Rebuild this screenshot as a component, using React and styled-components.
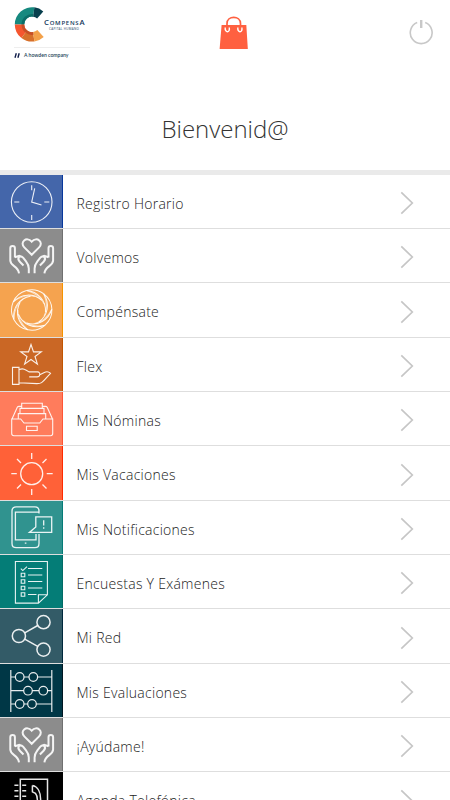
import styled, { createGlobalStyle } from "styled-components";

const GlobalStyle = createGlobalStyle`
  body {
    margin: 0;
    background: #fff;
    font-family: "Open Sans", "Noto Sans", sans-serif;
  }
`;

const Page = styled.div`
  width: 450px;
  height: 800px;
  overflow: hidden;
  background: #fff;
`;

const Header = styled.header`
  display: grid;
  grid-template-columns: 1fr 30px 1fr;
  align-items: start;
  height: 64px;
  padding: 0 16px 0 14px;
  box-sizing: border-box;
`;

const Brand = styled.div`
  width: 80px;
  padding-top: 6px;
`;

const BrandTop = styled.div`
  display: flex;
  align-items: flex-start;
  height: 42px;
  width: 76px;
  border-bottom: 1px solid #eee;
  box-sizing: border-box;
`;

const BrandName = styled.div`
  margin: 12px 0 0 -1px;
  color: #12395c;
  font-family: "Open Sans", sans-serif;
  font-size: 6px;
  font-weight: 600;
  line-height: 9px;
  letter-spacing: .75px;
  white-space: nowrap;

  b {
    font-size: 7.7px;
    font-weight: 600;
  }

  small {
    display: block;
    margin-left: 5px;
    font-size: 3px;
    font-weight: 400;
    line-height: 3px;
    letter-spacing: .3px;
  }
`;

const BrandOwner = styled.div`
  display: flex;
  align-items: center;
  gap: 4px;
  margin-top: 2px;
  color: #173e55;
  font-family: Lato, sans-serif;
  font-size: 5.1px;
  font-weight: 600;
  line-height: 10px;
  white-space: nowrap;
`;

const BagButton = styled.button`
  margin: 15px 0 0 0;
  padding: 0;
  border: none;
  background: none;
  line-height: 0;
`;

const ShopButton = styled(BagButton)`
  margin-left: 10px;
`;

const PowerButton = styled(BagButton)`
  margin-top: 19px;
  text-align: right;
`;

const Welcome = styled.h1`
  height: 105.6px;
  margin: 0;
  padding-top: 48px;
  box-sizing: border-box;
  color: #333;
  font-size: 24px;
  font-weight: 300;
  line-height: 34px;
  text-align: center;
`;

const Menu = styled.ul`
  margin: 0;
  padding: 0;
  list-style: none;
  border-top: 5px solid #eaeaea;
`;

const MenuItem = styled.li`
  display: flex;
  align-items: center;
  height: 54.33px;
  box-sizing: border-box;
  border-bottom: 1px solid #dedede;
`;

const IconBox = styled.div`
  width: 63px;
  height: 100%;
  box-sizing: border-box;
  background: ${(props) => props.$color};
  border-right: 1px solid ${(props) => props.$edge};

  svg {
    display: block;
    overflow: hidden;
  }
`;

const Label = styled.span`
  flex: 1;
  padding: 4.8px 0 0 13.5px;
  color: #222;
  font-size: 14px;
  font-weight: 300;
  line-height: 20px;
  letter-spacing: .27px;
  white-space: nowrap;
`;

const Chevron = styled.svg`
  flex: 0 0 auto;
  margin: 3.8px 36px 0 0;
`;

function Icon({ children, width = 1.1 }) {
  return (
    <svg width="62" height="53" viewBox="0 0 62 53" fill="none" stroke="#fff" strokeOpacity=".9" strokeWidth={width}>
      {children}
    </svg>
  );
}

const ClockIcon = () => (
  <Icon>
    <circle cx="31.7" cy="27" r="20.3" />
    <path d="M31.7 10.3v5M31.7 40v5M14.3 27h5M44.3 27h5M34.7 13.3L31.7 27l9.8 3" />
  </Icon>
);

const HandsIcon = () => (
  <Icon width={2}>
    <path d="M31.7 25.8l-7.4-7.4c-5-5 2.2-11.6 7.4-5.7 5.2-5.9 12.4.7 7.4 5.7z" />
    <path d="M19 44.3C18.3 37 10.3 37.2 10.3 31.5V19.2a2.3 2.3 0 0 1 4.6 0v9.3" />
    <path d="M23.5 36.5l-3.7-3.8c-3.5-3.7.5-7.2 3.5-3.8l2.7 3.5c2 2.5 2.8 4.2 2.8 7.2v4.7M14.9 28.3l4.3-1.5 3.2 1.2" />
    <path d="M44.4 44.3c.7-7.3 8.7-7.1 8.7-12.8V19.2a2.3 2.3 0 0 0-4.6 0v9.3" />
    <path d="M39.9 36.5l3.7-3.8c3.5-3.7-.5-7.2-3.5-3.8l-2.7 3.5c-2 2.5-2.8 4.2-2.8 7.2v4.7M48.5 28.3l-4.3-1.5-3.2 1.2" />
  </Icon>
);

const SwirlIcon = () => (
  <Icon width={1}>
    {[0, 1, 2, 3, 4, 5, 6].map((i) => (
      <g key={i} transform={`translate(31.7 27) rotate(${i * 51.43 + 10})`}>
        <path d="M-8.5 -18.3Q0 -22.4 9 -18.1" />
        <path d="M-8.5 -18.3C3 -19.3 12.5 -12 13.9 -.5" />
        <path d="M-8.5 -18.3C0 -17.5 7 -14.5 11.2 -8" strokeOpacity=".6" />
      </g>
    ))}
  </Icon>
);

const StarHandIcon = () => (
  <Icon>
    <path d="M31 6.5l2.5 7.4h7.8l-6.3 4.6 2.4 7.6-6.4-4.6-6.4 4.6 2.4-7.6-6.3-4.6h7.8z" />
    <path d="M12.5 29.4H19v17h-6.5zM19 31.7c4-1.8 6.5-.3 10 2.2h8.7c3 .3 2.7 4.8-.7 5h-7.8M39.8 36.8l4.5-2.4c2.7-1.2 5.6-.4 6.3 1-3.3 2.8-5.7 7-9 9.2-1.2.8-3 1-4.6 1L19 44.8" />
  </Icon>
);

const TrayIcon = () => (
  <Icon>
    <path d="M11.7 27h9l3.3 4h15.8l3.2-4h9.7v14.5q0 2.2-2.2 2.2H14q-2.3 0-2.3-2.2zM12 27l5.3-11.7q.5-.9 1.7-.9h2.6M52.5 27l-5.3-11.7q-.5-.9-1.7-.9h-2.8M21.7 16v-4.7h20.6V16M20 21.4v-5h24v5M18.3 26.8v-5.2h27.4v5.2M26.5 34.2h10.7v4.3H26.5z" />
  </Icon>
);

const SunIcon = () => (
  <Icon width={1.3}>
    <circle cx="31.7" cy="27.7" r="11" />
    <path d="M31.7 7v6M31.7 43v6M11.3 27.7h5.5M46.7 27.7h6M17 13l4 4M46.5 13l-4 4M17 42.5l4-4M46.5 42.5l-4-4" />
  </Icon>
);

const NotificationIcon = () => (
  <Icon width={1.3}>
    <path d="M39 12.5V10q0-4.2-4-4.2H16.2q-4.2 0-4.2 4.2v32.5q0 4.2 4.2 4.2H35q4 0 4-4.2V33" />
    <path d="M39 11.2H15.4v27.6H36V33M35.8 15.8h15.9v15.6H29.4l6.4-5.5zM43.7 19.2v5.4M43.7 26.2v1.5M24.8 42.2h1.6" />
  </Icon>
);

const SurveyIcon = () => (
  <Icon>
    <path d="M15.4 6.5h32v33.3l-9 8.3h-23zM38.4 48v-8.2h9" />
    <path d="M28 13.5h14.3M28 20h14.3M28 26.5h14.3M28 33h14.3M28 39.5h8.5" />
    <path d="M21.2 18.3h3.6v3.5h-3.6zM21.2 24.8h3.6v3.5h-3.6zM21.2 31.3h3.6v3.5h-3.6zM21.2 37.8h3.6v3.5h-3.6zM20.8 13.6l2 2 4.2-4" />
  </Icon>
);

const NetworkIcon = () => (
  <Icon width={1.5}>
    <circle cx="18.9" cy="27" r="6.6" />
    <circle cx="43.5" cy="13.2" r="6.6" />
    <circle cx="43.5" cy="40.6" r="6.6" />
    <path d="M24.7 23.8l13-7.3M24.7 30.2l13 7.2" />
  </Icon>
);

const AbacusIcon = () => (
  <Icon width={1.2}>
    <path d="M10.8 6v42M51.8 6v42M10.8 13h4.6M24 13h5M37.5 13h14.3M10.8 26.7h12.9M32.3 26.7h6.7M47.5 26.7h4.3M10.8 40h4.6M24 40h3.7M36.3 40h15.5" />
    <circle cx="19.7" cy="13" r="4.3" />
    <circle cx="33.3" cy="13" r="4.3" />
    <circle cx="28" cy="26.7" r="4.3" />
    <circle cx="43.3" cy="26.7" r="4.3" />
    <circle cx="19.7" cy="40" r="4.3" />
    <circle cx="32" cy="40" r="4.3" />
  </Icon>
);

const PhoneBookIcon = () => (
  <Icon width={1.5}>
    <path d="M20.3 53V7.3h27.2V53" />
    <path d="M14.4 13.3h4M22.2 13.3h4M14.4 18.8h4M22.2 18.8h4M14.4 24.3h4M22.2 24.3h4M14.4 29.8h4M22.2 29.8h4" />
    <path d="M32.4 13.6c5.5 1 8.4 6.8 8.2 14.5M32.4 13.6v6.2l3 1.5c1.8 2 2 5 2 7" />
  </Icon>
);

const items = [
  { label: "Registro Horario", icon: ClockIcon, color: "#4466aa", edge: "#08389c" },
  { label: "Volvemos", icon: HandsIcon, color: "#8c8c8c", edge: "#707070" },
  { label: "Compénsate", icon: SwirlIcon, color: "#f5a34f", edge: "#f59300" },
  { label: "Flex", icon: StarHandIcon, color: "#ca6725", edge: "#c25500" },
  { label: "Mis Nóminas", icon: TrayIcon, color: "#ff7c5c", edge: "#ff5535" },
  { label: "Mis Vacaciones", icon: SunIcon, color: "#ff6138", edge: "#ff2a00" },
  { label: "Mis Notificaciones", icon: NotificationIcon, color: "#30938f", edge: "#057b77" },
  { label: "Encuestas Y Exámenes", icon: SurveyIcon, color: "#047d77", edge: "#006b65" },
  { label: "Mi Red", icon: NetworkIcon, color: "#335b67", edge: "#00283c" },
  { label: "Mis Evaluaciones", icon: AbacusIcon, color: "#003746", edge: "#001722" },
  { label: "¡Ayúdame!", icon: HandsIcon, color: "#8c8c8c", edge: "#707070" },
  { label: "Agenda Telefónica", icon: PhoneBookIcon, color: "#000", edge: "#000" },
];

// point on a circle around the centre of the logo ring
const point = (r, deg) => {
  const a = (deg * Math.PI) / 180;
  return `${18 + r * Math.cos(a)} ${18.4 + r * Math.sin(a)}`;
};

const slice = (from, to, outer = 17.2, inner = 7.8) =>
  `M${point(outer, from)}A${outer} ${outer} 0 0 1 ${point(outer, to)}L${point(inner, to)}A${inner} ${inner} 0 0 0 ${point(inner, from)}z`;

function Logo() {
  return (
    <svg width="31" height="36" viewBox="0 0 31 36">
      <path d={slice(180, 278)} fill="#16897f" />
      <path d={slice(278, 311)} fill="#073f4d" />
      <path d={slice(128, 180)} fill="#f5562f" />
      <path d={slice(82, 128)} fill="#d7702b" />
      <path d={slice(47, 82)} fill="#f3a14a" />
      <path d={slice(180, 278, 10.5)} fill="#0c6d68" />
      <path d={slice(82, 180, 10.5)} fill="#c64f27" />
    </svg>
  );
}

export default function App() {
  return (
    <Page>
      <GlobalStyle />
      <Header>
        <Brand>
          <BrandTop>
            <Logo />
            <BrandName>
              <b>C</b>OMPENS<b>A</b>
              <small>CAPITAL HUMANO</small>
            </BrandName>
          </BrandTop>
          <BrandOwner>
            <svg width="6" height="5" viewBox="0 0 6 5" fill="none" stroke="#101d4a" strokeWidth="1.4">
              <path d="M1 4.8L2.3.2M3.9 4.8L5.2.2" />
            </svg>
            A howden company
          </BrandOwner>
        </Brand>
        <ShopButton>
          <svg width="30" height="35" viewBox="0 0 30 35" fill="none">
            <path d="M2.6 10h24.7l1.5 24H.6z" fill="#ff6040" />
            <path d="M8 14V8.5C8 .2 21.5.2 21.5 8.5V14" stroke="#ff6040" strokeWidth="1.7" />
            <path d="M6.2 12.5c-.5 5.7 5 5.7 4.1 0M18.8 12.5c-.5 5.7 5 5.7 4.1 0" stroke="#fff" strokeWidth="1.4" />
          </svg>
        </ShopButton>
        <PowerButton>
          <svg width="25" height="26" viewBox="0 0 25 26" fill="none" stroke="#c8c8c8">
            <path d="M8.2 3.6a10.9 10.9 0 1 0 8 0" strokeWidth="1.6" />
            <path d="M12.2 1v8" strokeWidth="2.4" />
          </svg>
        </PowerButton>
      </Header>
      <Welcome>Bienvenid@</Welcome>
      <Menu>
        {items.map(({ label, icon: ItemIcon, color, edge }) => (
          <MenuItem key={label}>
            <IconBox $color={color} $edge={edge}>
              <ItemIcon />
            </IconBox>
            <Label>{label}</Label>
            <Chevron width="14" height="24" viewBox="0 0 14 24" fill="none" stroke="#c6c6c6" strokeWidth="1.7">
              <path d="M1.3 1.3L12.3 12l-11 10.7" />
            </Chevron>
          </MenuItem>
        ))}
      </Menu>
    </Page>
  );
}
